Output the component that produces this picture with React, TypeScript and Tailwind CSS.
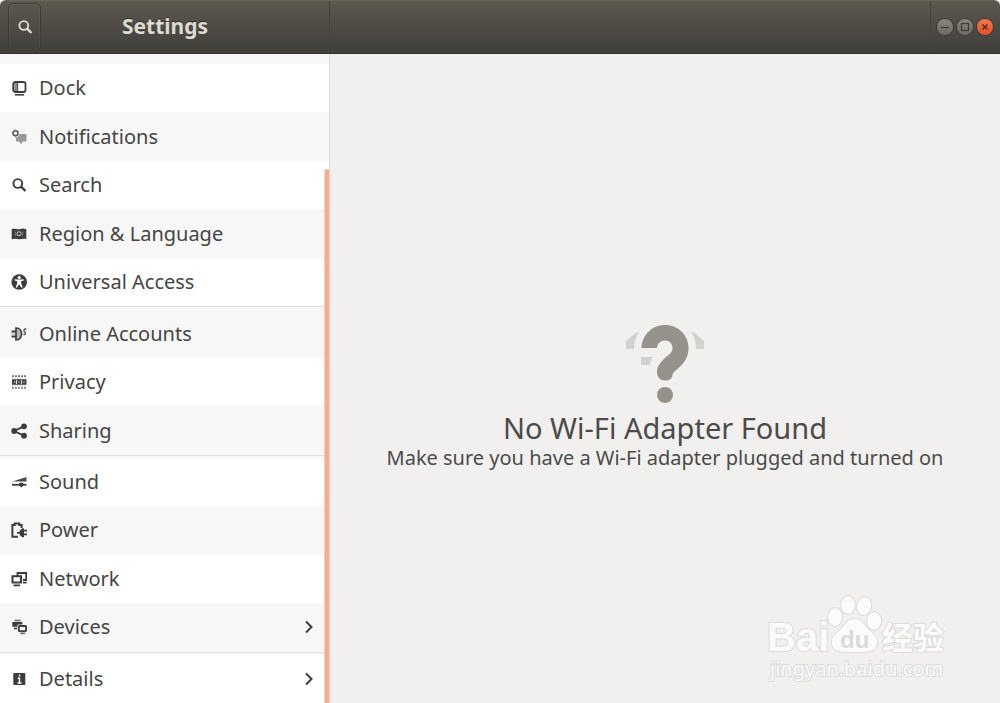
import React from 'react';
import clsx from 'clsx';

type Item = { label: string; icon: React.ReactNode; arrow?: boolean };

const Icon = ({ children }: { children: React.ReactNode }) => (
  <svg viewBox="0 0 16 16" className="size-4 shrink-0" fill="none" stroke="#3d3d3d" strokeWidth="1.8" aria-hidden="true">
    {children}
  </svg>
);

const Magnifier = () => (
  <>
    <circle cx="6.8" cy="6.5" r="4.4" strokeWidth="1.9" />
    <path d="m10 9.700 4.500 4.300" strokeWidth="2.4" />
  </>
);

const groups: Item[][] = [
  [
    {
      label: 'Dock',
      icon: (
        <Icon>
          <path d="M4.800 2.500v8.500" stroke="#8a8a8a" strokeWidth="3" />
          <rect x="2.200" y="2" width="12.300" height="10" rx="2" />
          <path d="M6.700 3v8" strokeWidth="1" />
          <path d="M4 14.800h9" strokeWidth="1.6" />
        </Icon>
      ),
    },
    {
      label: 'Notifications',
      icon: (
        <Icon>
          <path d="M6 5h8.500q1 0 1 1v5.500q0 1-1 1H12L10 15l-2-2.500H5V8z" fill="#999" stroke="none" />
          <circle cx="4.500" cy="4.300" r="4" fill="#f7f7f7" stroke="none" />
          <circle cx="4.500" cy="4.300" r="2.500" stroke="#555" strokeWidth="1.500" />
          <path d="M4.500.5v1M4.500 7v1.500M.8 4.300h1" stroke="#888" strokeWidth="1" />
        </Icon>
      ),
    },
    { label: 'Search', icon: <Icon><Magnifier /></Icon> },
    {
      label: 'Region & Language',
      icon: (
        <Icon>
          <path d="M.7 3.200c3-1.500 5 .8 8 0 2-.8 4-.8 6.600 0v10c-3-1.200-5 .7-7.600 0-2-.7-4-.7-7 0z" fill="#3d3d3d" stroke="none" />
          <circle cx="8" cy="7.700" r="2" stroke="#ccc" strokeWidth="1" />
          <path d="M5 5.500 4 7.500l1 2.500M11 5.500l1 2-1 2.500" stroke="#999" strokeWidth=".8" />
        </Icon>
      ),
    },
    {
      label: 'Universal Access',
      icon: (
        <Icon>
          <circle cx="8.200" cy="8" r="7.800" fill="#3d3d3d" stroke="none" />
          <circle cx="8.200" cy="3.500" r="1.600" fill="#fff" stroke="none" />
          <path d="M3.700 5.200 7.200 5.600h2l3.500-.4v1.300L10.200 7.200v2l1.500 4-1.300.5L8.200 10.200 6 13.700l-1.300-.5 1.500-4v-2l-2.500-.7z" fill="#fff" stroke="none" />
        </Icon>
      ),
    },
  ],
  [
    {
      label: 'Online Accounts',
      icon: (
        <Icon>
          <path d="M5 2c4 0 5.500 3.500 5.500 6S9 14 5 14z" fill="#bbb" strokeWidth="1.700" />
          <path d="M.5 5.500H5M.5 10.500H5" strokeWidth="1.800" />
          <path d="M0 8h4" stroke="#aaa" strokeWidth="1" />
          <path d="M15.300 3c-2.500-.5-3 2-1.700 2.700s1.200 3.300-1.200 2.800" stroke="#555" strokeWidth="1.400" />
        </Icon>
      ),
    },
    {
      label: 'Privacy',
      icon: (
        <Icon>
          <path d="M1 2.200h14.500M1 14h14.500" stroke="#777" strokeWidth="1.700" strokeDasharray="2 1" />
          <path d="M1 4h14.500M1 12.200h14.500" stroke="#aaa" strokeWidth="1.200" strokeDasharray="1 1.500" />
          <rect x="1" y="5.200" width="14.500" height="5.600" fill="#444" stroke="none" />
          <path d="M5.500 6v4M10.500 6v4M2.800 8h1.500M7.300 8h1.500M12.200 8h1.500" stroke="#ddd" strokeWidth="1" />
        </Icon>
      ),
    },
    {
      label: 'Sharing',
      icon: (
        <Icon>
          <path d="m13 3.300-10 4.700 10 4.700" strokeWidth="1.900" />
          <circle cx="13" cy="3.300" r="2.900" fill="#3d3d3d" stroke="none" />
          <circle cx="3.200" cy="8" r="2.900" fill="#3d3d3d" stroke="none" />
          <circle cx="13" cy="12.700" r="2.900" fill="#3d3d3d" stroke="none" />
        </Icon>
      ),
    },
  ],
  [
    {
      label: 'Sound',
      icon: (
        <Icon>
          <path d="M1.500 7.500 15.500 3v4.500z" fill="#4a4a4a" stroke="none" />
          <path d="M1 10.800h14.500" strokeWidth="1.800" />
          <path d="M8.300 8.800h4v3l-2 1.700-2-1.700z" fill="#3d3d3d" stroke="none" />
        </Icon>
      ),
    },
    {
      label: 'Power',
      icon: (
        <Icon>
          <path d="M7 14.700H1.400V3h2.300V1.400h4.600V3h2.300v3" strokeWidth="2" />
          <path d="M6 10h2.500c0-2 2-3.800 4.500-3.800v1.500h3v1.800h-3v2h3v1.800h-3v2c-2.500 0-4.500-1.600-4.500-3.500H6z" fill="#3d3d3d" stroke="none" />
        </Icon>
      ),
    },
    {
      label: 'Network',
      icon: (
        <Icon>
          <path d="M6.500 5V2h8.700v7H12" />
          <rect x="1.500" y="5.200" width="8.500" height="6.300" strokeWidth="2" />
          <path d="M2.500 14.300h6.500M12 11.700h3.500" strokeWidth="1.700" />
        </Icon>
      ),
    },
    {
      label: 'Devices',
      arrow: true,
      icon: (
        <Icon>
          <path d="M3.500 1.500h6" stroke="#777" strokeWidth="1.700" />
          <path d="M1.300 3h10v2.500H6.500v2.200H1.300z" fill="#3d3d3d" stroke="none" />
          <path d="M3 9.500h3" strokeWidth="1.700" />
          <rect x="7.800" y="7" width="7.300" height="5.200" rx="1" strokeWidth="1.900" />
          <path d="M9.500 14.500H14" stroke="#666" strokeWidth="1.400" />
        </Icon>
      ),
    },
  ],
  [
    {
      label: 'Details',
      arrow: true,
      icon: (
        <Icon>
          <rect x="2.300" y="2" width="12" height="12" rx="1" fill="#3d3d3d" stroke="none" />
          <path d="M8.500 3.500v2M6.700 7.200h1.800v4.300M6.500 12h4" stroke="#fff" strokeWidth="1.400" />
        </Icon>
      ),
    },
  ],
];

const Header = () => (
  <header className="flex h-[54px] shrink-0 rounded-t-md border-t border-b border-t-[#6b675c] border-b-[#33322e] bg-linear-to-b from-[#5b584e] to-[#403f3a]">
    <div className="flex w-[330px] shrink-0 items-center border-r border-[#45433d] pl-2">
      <button
        type="button"
        aria-label="Search"
        className="flex h-12 w-[33px] items-center justify-center rounded-[5px] border border-[#3b3a35] inset-ring inset-ring-white/5"
      >
        <svg viewBox="0 0 16 16" className="size-4" fill="none" stroke="#dfdbd2" aria-hidden="true">
          <Magnifier />
        </svg>
      </button>
      <h1 className="flex-1 pr-10 text-center text-[21px] font-bold text-[#dfdbd2] text-shadow-[0_-1px_0_#33322e]">Settings</h1>
    </div>
    <div className="flex flex-1 items-center justify-end">
      <div className="flex h-full items-center gap-1 border-l border-[#45433d] pr-[7px] pl-[6px]">
        <button type="button" aria-label="Minimize" className="size-4 rounded-full bg-linear-to-b from-[#87857d] to-[#6d6b64] ring ring-[#3b3a35]">
          <svg viewBox="0 0 16 16" stroke="#3b3a35" strokeWidth="1.200"><path d="M4 8.500h8" /></svg>
        </button>
        <button type="button" aria-label="Maximize" className="size-4 rounded-full bg-linear-to-b from-[#87857d] to-[#6d6b64] ring ring-[#3b3a35]">
          <svg viewBox="0 0 16 16" fill="none" stroke="#3b3a35" strokeWidth="1.200"><rect x="4.500" y="4.500" width="7" height="7" /></svg>
        </button>
        <button type="button" aria-label="Close" className="size-4 rounded-full bg-linear-to-b from-[#f4764c] to-[#e35022] ring ring-[#3b3a35]">
          <svg viewBox="0 0 16 16" stroke="#5c2a17" strokeWidth="1.500"><path d="m5.500 5.500 5 5m0-5-5 5" /></svg>
        </button>
      </div>
    </div>
  </header>
);

const Sidebar = () => (
  <nav className="relative flex w-[330px] shrink-0 flex-col border-r border-[#dedddb] bg-white">
    <div className="h-[10px] shrink-0 bg-[#f7f7f7]" />
    {groups.map((group, g) => {
      const before = groups.slice(0, g).reduce((n, x) => n + x.length, 0);
      return (
        <React.Fragment key={g}>
          {g > 0 && <div className="h-[3px] shrink-0 border-t border-[#dedede] bg-[#f7f7f7]" />}
          {group.map((item, i) => (
            <button
              key={item.label}
              type="button"
              className={clsx(
                'flex min-h-12 flex-1 items-center gap-3 pr-3 pl-[11px] text-left text-xl text-[#454545]',
                (before + i) % 2 ? 'bg-[#f7f7f7]' : 'bg-white'
              )}
            >
              {item.icon}
              <span className="flex-1">{item.label}</span>
              {item.arrow && (
                <svg viewBox="0 0 16 16" className="size-4" fill="none" stroke="#3d3d3d" strokeWidth="2" aria-hidden="true">
                  <path d="m5 2.500 5.500 5.500L5 13.500" />
                </svg>
              )}
            </button>
          ))}
        </React.Fragment>
      );
    })}
    {/* Overlay scrollbar */}
    <div className="absolute top-[115px] -right-px bottom-0 w-[6px] rounded-t-xs border-x border-t border-[#ecd3c8] bg-[#f8ac8d]" />
  </nav>
);

const Watermark = () => (
  <svg viewBox="0 0 190 92" className="absolute right-[47px] bottom-4 w-[190px]" fill="#fbfbfb" stroke="#dcdbd9" strokeWidth="2" aria-hidden="true">
    <g style={{ paintOrder: 'stroke' }}>
      <text x="4" y="56" className="font-['Liberation_Sans'] text-[40px] font-bold">Bai</text>
      <ellipse cx="72" cy="22" rx="7" ry="9" />
      <ellipse cx="85" cy="10" rx="7" ry="9" />
      <ellipse cx="101" cy="11" rx="7" ry="9" transform="rotate(10 101 11)" />
      <ellipse cx="111" cy="26" rx="7" ry="9" />
      <path d="M91 24c8 0 10 6 15 11 6 5 9 9 8 14-2 8-9 8-23 8s-20 0-22-8c-1-5 2-9 8-14 5-5 7-11 14-11z" />
      <text x="77" y="53" fill="#dcdbd9" strokeWidth="0" className="font-['Liberation_Sans'] text-2xl font-bold">du</text>
      <text x="119" y="54" className="font-['Liberation_Sans','Noto_Sans_CJK_SC',sans-serif] text-[31px] font-bold">经验</text>
      <text x="7" y="81" strokeWidth="2" className="font-['Noto_Sans',sans-serif] text-xl">jingyan.baidu.com</text>
    </g>
  </svg>
);

export default function App() {
  return (
    <div className="flex min-h-screen flex-col bg-[#f1f0ee] font-['Noto_Sans','Open_Sans',sans-serif]">
      <Header />
      <div className="flex flex-1">
        <Sidebar />
        <main className="relative flex flex-1 flex-col items-center justify-center pt-9 text-[#4b4b4b]">
          <svg viewBox="0 0 80 82" className="mb-2 w-20" aria-hidden="true">
            <path d="M1 19 8 13Q11 10 14 10Q9 17 9 27H1zM79 19 72 13Q69 10 66 10Q71 17 71 27h8zM16 35h12q-3 4-3 8h-9z" fill="#d2d1cd" />
            <path d="M16.500 26C17 13 27 3 40 3s23.500 10 23.500 23c0 9-4 15-10 20-4 3.500-6 5-6 7 0 3.500-3 5.500-7.500 5.500S32 55 32 50c0-7 5-11 9-15 4-3 6.500-5 6.500-9 0-4-3-7.500-7.500-7.500S32 22 32 26z" fill="#95928b" />
            <circle cx="40" cy="73" r="8" fill="#95928b" />
          </svg>
          <h2 className="text-[29px] leading-8">No Wi-Fi Adapter Found</h2>
          <p className="text-xl leading-7">Make sure you have a Wi-Fi adapter plugged and turned on</p>
          <Watermark />
        </main>
      </div>
    </div>
  );
}
